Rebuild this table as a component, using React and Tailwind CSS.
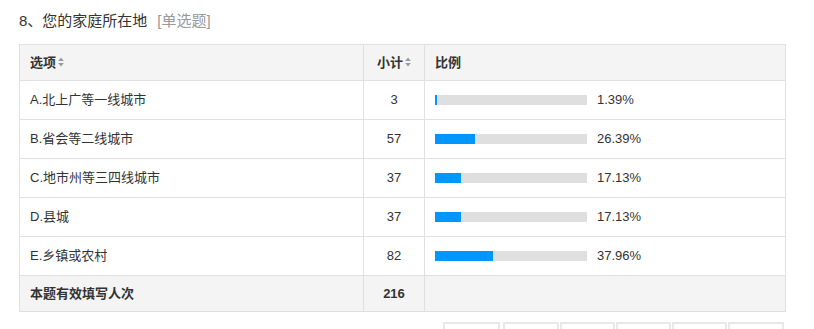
import React from 'react';

const rows = [
  { label: 'A.北上广等一线城市', count: 3, pct: 1.39 },
  { label: 'B.省会等二线城市', count: 57, pct: 26.39 },
  { label: 'C.地市州等三四线城市', count: 37, pct: 17.13 },
  { label: 'D.县城', count: 37, pct: 17.13 },
  { label: 'E.乡镇或农村', count: 82, pct: 37.96 },
];

const SortIcon = () => (
  <svg width="6" height="10" viewBox="0 0 6 10" className="inline-block ml-[2px] -mt-[2px] align-middle">
    <path d="M3 0.5 L5.8 4 L0.2 4 Z" fill="#999" />
    <path d="M3 9.5 L5.8 6 L0.2 6 Z" fill="#999" />
  </svg>
);

const App = () => {
  return (
    <div
      className="w-[814px] h-[329px] overflow-hidden bg-white text-[#333]"
      style={{ fontFamily: '"Liberation Sans", "Noto Sans CJK SC", sans-serif' }}
    >
      {/* Title */}
      <div className="pl-[19px] pt-[10px] mb-[12px] text-[15px] leading-[22px]">
        8、您的家庭所在地
        <span className="ml-[10px] text-[#999]">[单选题]</span>
      </div>

      {/* Table */}
      <table className="ml-[19px] w-[766px] border-collapse text-[13px] table-fixed">
        <colgroup>
          <col className="w-[344px]" />
          <col className="w-[61px]" />
          <col className="w-[361px]" />
        </colgroup>
        <thead>
          <tr className="h-[36px] bg-[#f4f4f4] font-bold">
            <th className="border border-[#e0e0e0] text-left pl-[10px] font-bold">
              选项<SortIcon />
            </th>
            <th className="border border-[#e0e0e0] text-center font-bold">
              小计<SortIcon />
            </th>
            <th className="border border-[#e0e0e0] text-left pl-[10px] font-bold">比例</th>
          </tr>
        </thead>
        <tbody>
          {rows.map((r) => (
            <tr key={r.label} className="h-[39px]">
              <td className="border border-[#e0e0e0] pl-[10px]">{r.label}</td>
              <td className="border border-[#e0e0e0] text-center">{r.count}</td>
              <td className="border border-[#e0e0e0] pl-[10px]">
                <div className="flex items-center">
                  <div className="w-[152px] h-[10px] bg-[#dfdfdf]">
                    <div className="h-full bg-[#0096ff]" style={{ width: `${Math.max(r.pct, 1.5)}%` }} />
                  </div>
                  <span className="ml-[10px]">{r.pct.toFixed(2)}%</span>
                </div>
              </td>
            </tr>
          ))}
          <tr className="h-[36px] bg-[#f4f4f4] font-bold">
            <td className="border border-[#e0e0e0] pl-[10px]">本题有效填写人次</td>
            <td className="border border-[#e0e0e0] text-center">216</td>
            <td className="border border-[#e0e0e0]" />
          </tr>
        </tbody>
      </table>

      {/* Pagination / actions */}
      <div className="flex justify-end pr-[30px] mt-[10px]">
        <div className="w-[57px] h-[30px] border-2 border-[#e8e8e8] mr-[3px]" />
        <div className="w-[56px] h-[30px] border-2 border-[#e8e8e8] mr-[1px]" />
        <div className="w-[55px] h-[30px] border-2 border-[#e8e8e8] mr-[1px]" />
        <div className="w-[55px] h-[30px] border-2 border-[#e8e8e8] mr-[1px]" />
        <div className="w-[55px] h-[30px] border-2 border-[#e8e8e8] mr-[1px]" />
        <div className="w-[56px] h-[30px] border-2 border-[#e8e8e8]" />
      </div>
    </div>
  );
};

export default App;
